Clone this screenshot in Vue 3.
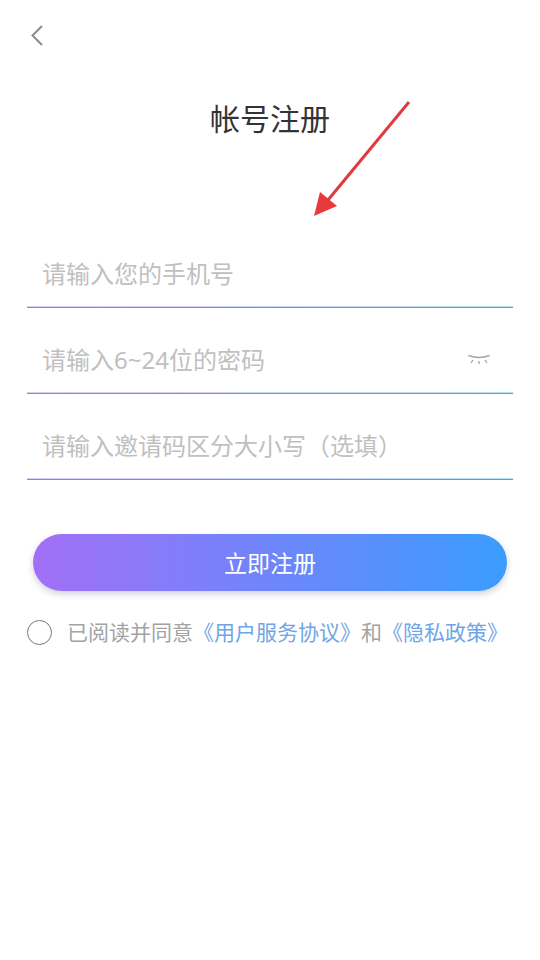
<script setup>
const fields = [
  { id: 1, text: '请输入您的手机号', eye: false },
  { id: 2, text: '请输入6~24位的密码', eye: true },
  { id: 3, text: '请输入邀请码区分大小写（选填）', eye: false },
]
</script>

<template>
  <div class="page">
    <svg class="back" width="16" height="24" viewBox="0 0 16 24">
      <path d="M13 2 L3.5 11.5 L13 21" fill="none" stroke="#8c8c8c" stroke-width="2" />
    </svg>
    <h1 class="title">帐号注册</h1>
    <div class="form">
      <div v-for="f in fields" :key="f.id" class="field">
        <span class="placeholder">{{ f.text }}</span>
        <svg v-if="f.eye" class="eye" width="24" height="14" viewBox="0 0 24 14">
          <path d="M1.5 2.5 C8 5 16 5 22.5 2.5" fill="none" stroke="#a3a3a3" stroke-width="1.4" />
          <path d="M6 7 L4 10 M12 8 V11 M18 7 L20 10" fill="none" stroke="#a3a3a3" stroke-width="1.3" />
        </svg>
      </div>
    </div>
    <button class="submit" type="button">立即注册</button>
    <div class="agree">
      <span class="radio"></span>
      <p class="agree-text">已阅读并同意<a class="link">《用户服务协议》</a>和<a class="link">《隐私政策》</a></p>
    </div>
    <svg class="arrow" width="110" height="130" viewBox="0 0 110 130">
      <path d="M102 4 L21 102" fill="none" stroke="#e03a3e" stroke-width="3" />
      <path d="M7 118 L13 94 L30 108 Z" fill="#e63a3d" />
    </svg>
  </div>
</template>

<style>
html, body { margin: 0; background: #fff; }
</style>

<style scoped>
.page {
  position: relative;
  box-sizing: border-box;
  width: 540px;
  height: 960px;
  overflow: hidden;
  padding: 24px 27px 0;
  background: #fff;
  font-family: "Noto Sans", "Noto Sans CJK SC", sans-serif;
}
.back { display: block; margin-left: 2px; }
.title {
  margin: 49px 0 0;
  height: 44px;
  font-size: 30px;
  line-height: 44px;
  font-weight: 400;
  text-align: center;
  color: #333;
}
.form { margin-top: 81px; }
.field {
  box-sizing: border-box;
  height: 86px;
  display: flex;
  align-items: center;
  justify-content: space-between;
  padding: 18px 22px 0 15px;
  background:
    linear-gradient(90deg, #a078e0, #7090e0 50%, #40acd8) left bottom / 100% 1px no-repeat,
    linear-gradient(90deg, rgba(138, 79, 240, 0.3), rgba(74, 116, 240, 0.3) 50%, rgba(16, 160, 216, 0.3)) left bottom / 100% 2px no-repeat;
}
.placeholder { font-size: 24px; line-height: 34px; color: #c0c0c0; }
.eye { display: block; margin-top: -1px; }
.submit {
  display: block;
  width: 474px;
  height: 57px;
  margin: 54px 0 0 6px;
  padding: 0 0 2px;
  border: 0;
  border-radius: 29px;
  background: linear-gradient(90deg, #a26ff6, #3b9cff);
  box-shadow: 0 3px 6px rgba(90, 90, 130, 0.28);
  color: #fff;
  font-family: inherit;
  font-size: 23px;
}
.agree {
  display: flex;
  align-items: center;
  margin-top: 26px;
}
.radio {
  box-sizing: border-box;
  width: 25px;
  height: 25px;
  border: 1.5px solid #777;
  border-radius: 50%;
}
.agree-text {
  margin: 0 0 0 15px;
  font-size: 21px;
  line-height: 30px;
  color: #a3a3a3;
  white-space: nowrap;
}
.link { color: #6fa5e6; }
.arrow { position: absolute; left: 307px; top: 98px; }
</style>
